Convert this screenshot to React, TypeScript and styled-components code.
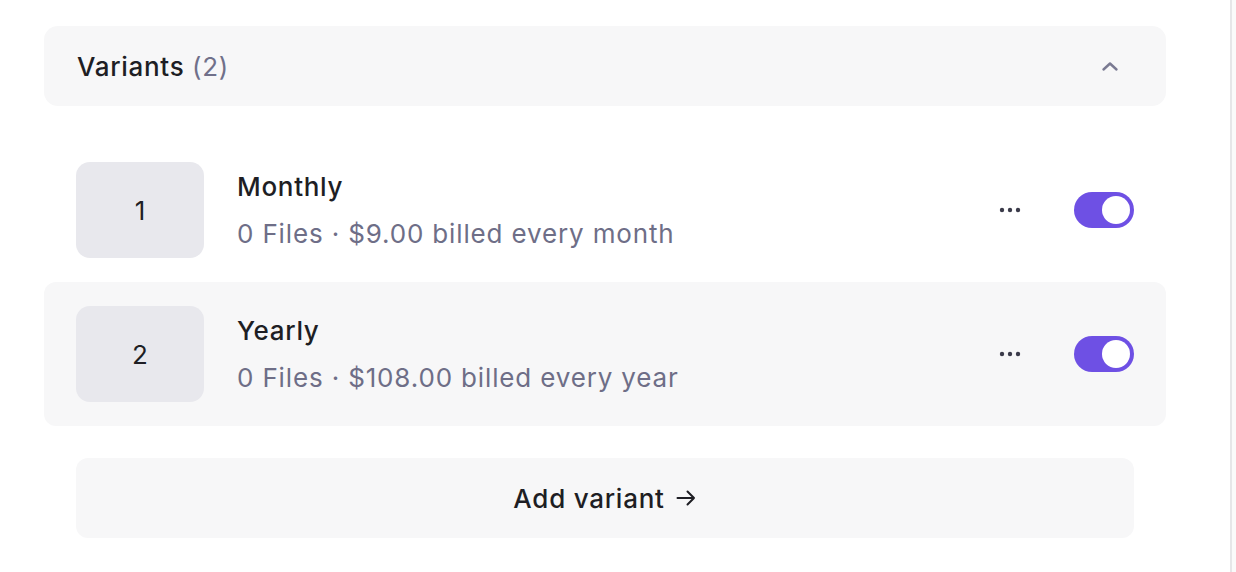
import React, { useState } from "react";
import styled, { createGlobalStyle } from "styled-components";

const GlobalStyle = createGlobalStyle`
  html, body {
    margin: 0;
    padding: 0;
    background: #ffffff;
  }
  body {
    font-family: Inter, "Noto Sans", "Liberation Sans", sans-serif;
    color: #1e1e24;
    -webkit-font-smoothing: antialiased;
  }
`;

const Page = styled.div`
  display: flex;
  width: 1236px;
  height: 572px;
  overflow: hidden;
`;

const Main = styled.div`
  width: 1230px;
  flex-shrink: 0;
  padding: 26px 0 0 44px;
  box-sizing: border-box;
`;

const Divider = styled.div`
  width: 2px;
  flex-shrink: 0;
  background: #e6e6e8;
`;

const SidePane = styled.div`
  flex: 1;
  background: #fafafa;
`;

const Panel = styled.div`
  width: 1122px;
`;

const Header = styled.div`
  display: flex;
  align-items: center;
  justify-content: space-between;
  height: 80px;
  padding: 0 46px 0 33px;
  box-sizing: border-box;
  border-radius: 14px;
  background: #f7f7f8;
  cursor: pointer;
`;

const HeaderTitle = styled.div`
  font-size: 26px;
  font-weight: 450;
  letter-spacing: 0.7px;
  color: #1e1e24;
`;

const Count = styled.span`
  font-weight: 400;
  color: #70708a;
`;

const List = styled.div`
  display: flex;
  flex-direction: column;
  margin-top: 32px;
`;

const Row = styled.div<{ $active?: boolean }>`
  display: flex;
  align-items: center;
  height: 144px;
  padding: 0 32px;
  box-sizing: border-box;
  border-radius: 12px;
  background: ${({ $active }) => ($active ? "#f7f7f8" : "transparent")};
`;

const Index = styled.div`
  display: flex;
  align-items: center;
  justify-content: center;
  width: 128px;
  height: 96px;
  flex-shrink: 0;
  border-radius: 14px;
  background: #e8e8ed;
  font-size: 26px;
  color: #1e1e24;
`;

const Info = styled.div`
  display: flex;
  flex-direction: column;
  gap: 11px;
  margin-left: 33px;
  flex: 1;
`;

const Name = styled.div`
  font-size: 26px;
  line-height: 36px;
  font-weight: 450;
  letter-spacing: 0.7px;
  color: #1e1e24;
`;

const Meta = styled.div`
  font-size: 26px;
  line-height: 36px;
  letter-spacing: 0.85px;
  color: #6e6e87;
`;

const MoreButton = styled.button`
  display: flex;
  align-items: center;
  justify-content: center;
  width: 40px;
  height: 40px;
  padding: 0;
  border: none;
  background: transparent;
  cursor: pointer;
`;

const Toggle = styled.button<{ $on: boolean }>`
  position: relative;
  width: 60px;
  height: 36px;
  margin-left: 44px;
  padding: 0;
  border: none;
  border-radius: 18px;
  background: ${({ $on }) => ($on ? "#6e50e4" : "#d4d4dc")};
  cursor: pointer;
`;

const Knob = styled.span<{ $on: boolean }>`
  position: absolute;
  top: 4px;
  left: ${({ $on }) => ($on ? "28px" : "4px")};
  width: 28px;
  height: 28px;
  border-radius: 50%;
  background: #ffffff;
`;

const AddButton = styled.button`
  display: flex;
  align-items: center;
  justify-content: center;
  gap: 10px;
  width: calc(100% - 64px);
  height: 80px;
  margin: 32px 32px 0;
  border: none;
  border-radius: 12px;
  background: #f7f7f8;
  font-family: inherit;
  font-size: 26px;
  font-weight: 450;
  letter-spacing: 0.75px;
  color: #1e1e24;
  cursor: pointer;
`;

const Chevron = () => (
  <svg width="20" height="12" viewBox="0 0 20 12" fill="none">
    <path d="M3.5 9.5 L10 3.5 L16.5 9.5" stroke="#7a7a92" strokeWidth="2.4" strokeLinecap="round" strokeLinejoin="round" />
  </svg>
);

const Dots = () => (
  <svg width="24" height="8" viewBox="0 0 24 8">
    <circle cx="4" cy="4" r="2.2" fill="#3b3b4a" />
    <circle cx="12" cy="4" r="2.2" fill="#3b3b4a" />
    <circle cx="20" cy="4" r="2.2" fill="#3b3b4a" />
  </svg>
);

const Arrow = () => (
  <svg width="22" height="22" viewBox="0 0 22 22" fill="none">
    <path d="M2.5 11 H19 M12.5 4.5 L19 11 L12.5 17.5" stroke="#1e1e24" strokeWidth="2" strokeLinecap="round" strokeLinejoin="round" />
  </svg>
);

const variants = [
  { id: 1, name: "Monthly", meta: "0 Files · $9.00 billed every month" },
  { id: 2, name: "Yearly", meta: "0 Files · $108.00 billed every year" },
];

const App = () => {
  const [enabled, setEnabled] = useState<Record<number, boolean>>({ 1: true, 2: true });

  return (
    <>
      <GlobalStyle />
      <Page>
        <Main>
          <Panel>
            <Header>
              <HeaderTitle>
                Variants <Count>(2)</Count>
              </HeaderTitle>
              <Chevron />
            </Header>
            <List>
              {variants.map((v, i) => (
                <Row key={v.id} $active={i === 1}>
                  <Index>{v.id}</Index>
                  <Info>
                    <Name>{v.name}</Name>
                    <Meta>{v.meta}</Meta>
                  </Info>
                  <MoreButton>
                    <Dots />
                  </MoreButton>
                  <Toggle
                    $on={enabled[v.id]}
                    onClick={() => setEnabled({ ...enabled, [v.id]: !enabled[v.id] })}
                  >
                    <Knob $on={enabled[v.id]} />
                  </Toggle>
                </Row>
              ))}
            </List>
            <AddButton>
              Add variant <Arrow />
            </AddButton>
          </Panel>
        </Main>
        <Divider />
        <SidePane />
      </Page>
    </>
  );
};

export default App;
